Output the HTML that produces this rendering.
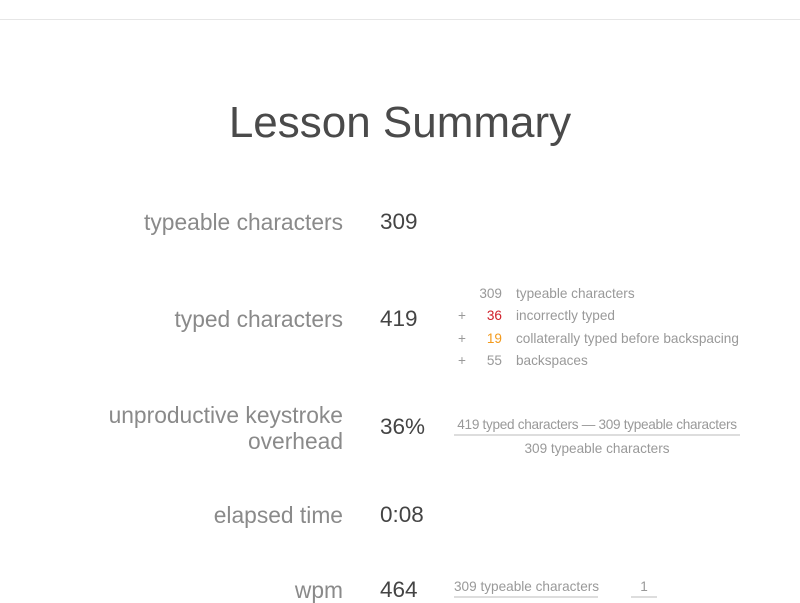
<!DOCTYPE html>
<html><head><style>
body{margin:0;width:800px;height:600px;overflow:hidden;background:#fff;font-family:"Liberation Sans",sans-serif;position:relative}
.top{position:absolute;left:0;top:19px;width:800px;height:1px;background:#e6e6e6}
h1{position:absolute;left:0;width:800px;top:98px;margin:0;text-align:center;font-weight:normal;font-size:44px;color:#4a4a4a}
.l{position:absolute;right:457px;text-align:right;font-size:22.8px;color:#8a8a8a;line-height:26px;white-space:nowrap}
.v{position:absolute;left:380px;font-size:22.5px;color:#444;line-height:26px}
.s{position:absolute;font-size:13.6px;color:#999;line-height:16px;white-space:nowrap}
.r{text-align:right;width:30px}
</style></head><body>
<div class="top"></div>
<h1>Lesson Summary</h1>
<div class="l" style="top:209px">typeable characters</div><div class="v" style="top:209px">309</div>
<div class="l" style="top:306px">typed characters</div><div class="v" style="top:306px">419</div>
<div class="l" style="top:402px">unproductive keystroke<br>overhead</div><div class="v" style="top:414px">36%</div>
<div class="l" style="top:502px">elapsed time</div><div class="v" style="top:502px">0:08</div>
<div class="l" style="top:577px">wpm</div><div class="v" style="top:577px">464</div>

<div class="s r" style="left:472px;top:286px">309</div><div class="s" style="left:516px;top:286px">typeable characters</div>
<div class="s" style="left:458px;top:308px">+</div><div class="s r" style="left:472px;top:308px;color:#d0202a">36</div><div class="s" style="left:516px;top:308px">incorrectly typed</div>
<div class="s" style="left:458px;top:331px">+</div><div class="s r" style="left:472px;top:331px;color:#f39a1c">19</div><div class="s" style="left:516px;top:331px">collaterally typed before backspacing</div>
<div class="s" style="left:458px;top:353px">+</div><div class="s r" style="left:472px;top:353px">55</div><div class="s" style="left:516px;top:353px">backspaces</div>

<div class="s" style="left:454px;top:417px;width:286px;text-align:center;letter-spacing:-0.3px">419 typed characters — 309 typeable characters</div>
<div style="position:absolute;left:454px;top:434px;width:286px;height:2px;background:#ddd"></div>
<div class="s" style="left:454px;top:441px;width:286px;text-align:center">309 typeable characters</div>

<div class="s" style="left:454px;top:579px">309 typeable characters</div>
<div style="position:absolute;left:454px;top:596px;width:144px;height:2px;background:#ddd"></div>
<div class="s" style="left:631px;top:579px;width:26px;text-align:center">1</div>
<div style="position:absolute;left:631px;top:596px;width:26px;height:2px;background:#ddd"></div>
</body></html>
